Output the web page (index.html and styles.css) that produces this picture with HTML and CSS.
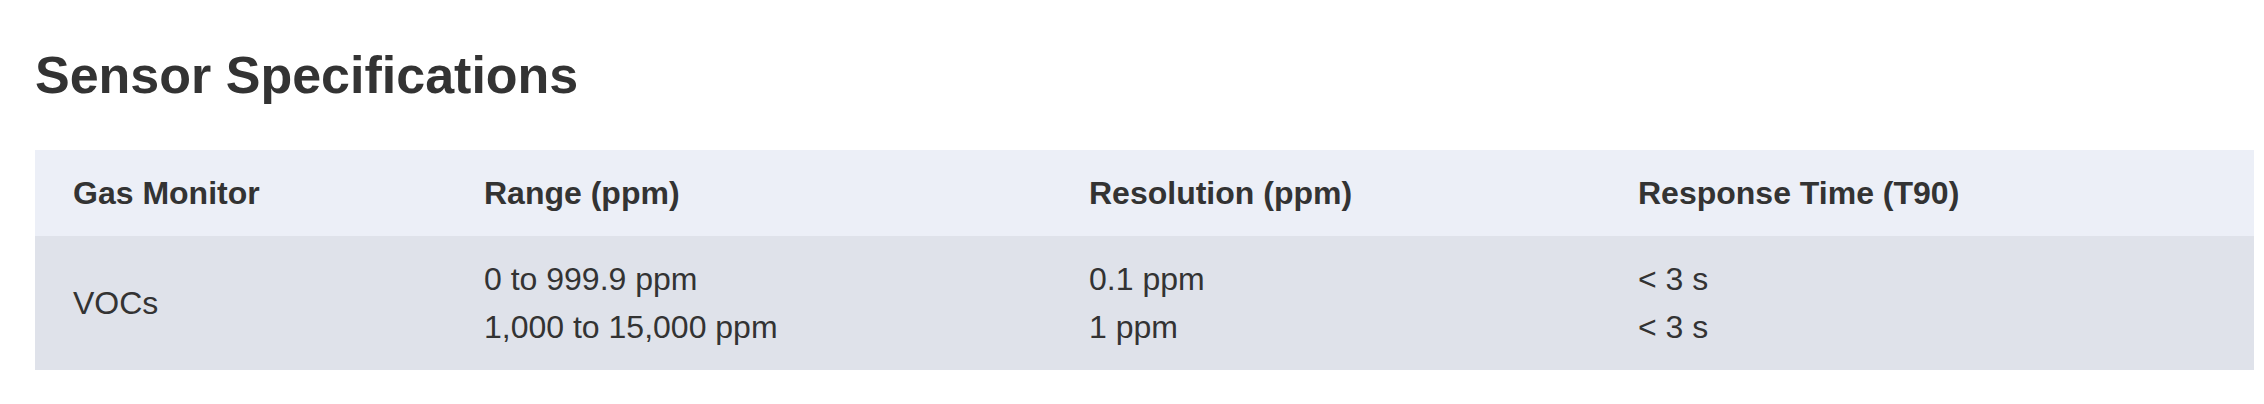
FILE: index.html
```html
<!DOCTYPE html>
<html lang="en">
<head>
<meta charset="utf-8">
<title>Sensor Specifications</title>
<link rel="stylesheet" href="styles.css">
</head>
<body>
<main class="page">
  <h1 class="title">Sensor Specifications</h1>
  <table class="specs">
    <colgroup>
      <col class="c1"><col class="c2"><col class="c3"><col class="c4">
    </colgroup>
    <thead>
      <tr>
        <th>Gas Monitor</th>
        <th>Range (ppm)</th>
        <th>Resolution (ppm)</th>
        <th>Response Time (T90)</th>
      </tr>
    </thead>
    <tbody>
      <tr>
        <td>VOCs</td>
        <td>0 to 999.9 ppm<br>1,000 to 15,000 ppm</td>
        <td>0.1 ppm<br>1 ppm</td>
        <td>&lt; 3 s<br>&lt; 3 s</td>
      </tr>
    </tbody>
  </table>
</main>
</body>
</html>
```
FILE: styles.css
```css
html, body {
  margin: 0;
  background: #ffffff;
}
body {
  font-family: "Liberation Sans", Arial, sans-serif;
  color: #333333;
}
.page {
  padding: 46px 0 0 35px;
}
.title {
  margin: 0 0 44px;
  font-size: 52px;
  line-height: 1.15;
  font-weight: 700;
  color: #333333;
}
.specs {
  width: 2219px;
  border-collapse: collapse;
  table-layout: fixed;
  font-size: 32px;
  line-height: 1.5;
}
.c1 { width: 411px; }
.c2 { width: 605px; }
.c3 { width: 549px; }
.c4 { width: 654px; }
.specs th,
.specs td {
  padding: 19px 38px;
  text-align: left;
  vertical-align: middle;
}
.specs th {
  font-weight: 700;
}
.specs thead tr {
  background: #eceff7;
}
.specs tbody tr {
  background: #dfe2ea;
}
```
